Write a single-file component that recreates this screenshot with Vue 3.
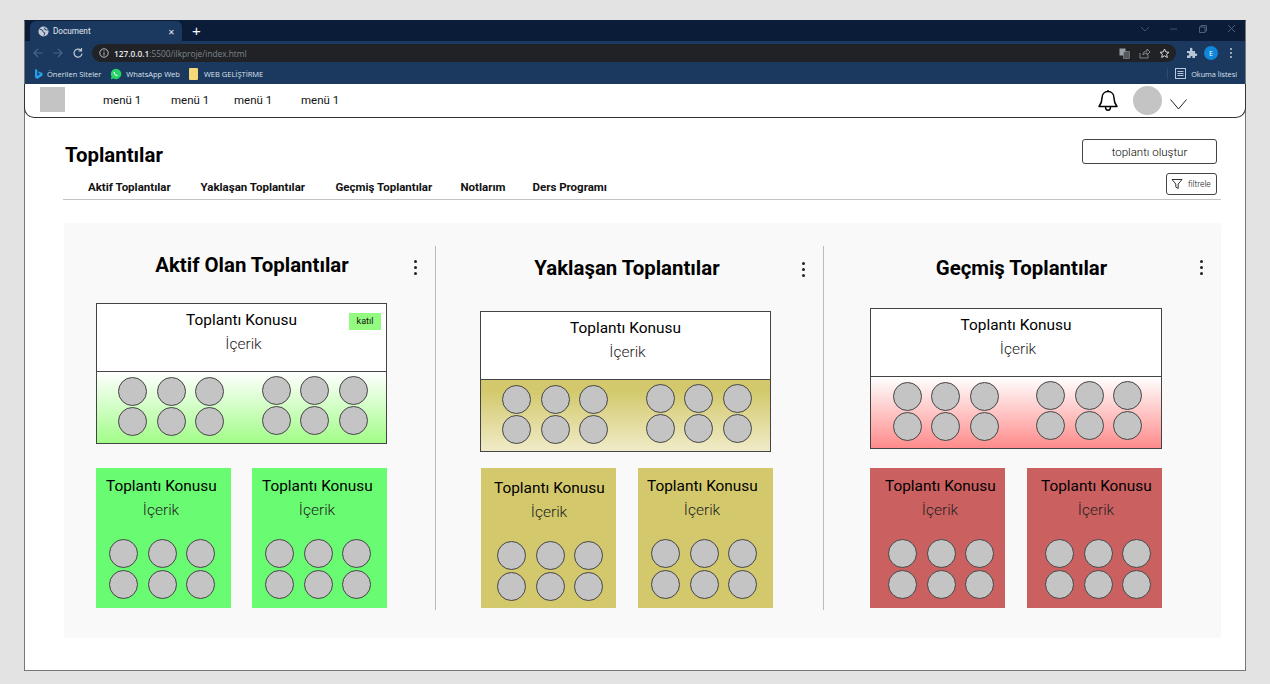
<template>
  <div class="page">
    <div class="frame">
      <div class="chrome">
        <div class="tabbar">
          <div class="tab">
            <svg class="globe" width="11" height="11" viewBox="0 0 12 12"><circle cx="6" cy="6" r="5.5" fill="#c3cad6" /><path d="M2 3.500l3 1 .5 2 2 1-1 3M8 1.500L7 3.500l2.500 1L11 4" stroke="#1c3a63" fill="none" /></svg>
            <span class="tab-title">Document</span>
            <span class="tab-x">✕</span>
          </div>
          <span class="tab-plus">+</span>
          <div class="win-btns">
            <svg width="10" height="10" viewBox="0 0 10 10"><path d="M1 3l4 4 4-4" stroke="#3f5573" fill="none" /></svg>
            <svg width="10" height="10" viewBox="0 0 10 10"><path d="M1 5h7" stroke="#3f5573" fill="none" /></svg>
            <svg width="10" height="10" viewBox="0 0 10 10"><path d="M1.500 3h5.500v5.500h-5.500zM3 3V1.500h5.500V7H7" stroke="#4d617d" fill="none" /></svg>
            <svg width="10" height="10" viewBox="0 0 10 10"><path d="M1 1l7 7M8 1l-7 7" stroke="#4d617d" fill="none" /></svg>
          </div>
        </div>
        <div class="toolbar">
          <svg class="nav" width="12" height="12" viewBox="0 0 12 12"><path d="M11 6H2M6 2L2 6l4 4" stroke="#4b6384" stroke-width="1.200" fill="none" /></svg>
          <svg class="nav" width="12" height="12" viewBox="0 0 12 12"><path d="M1 6h9M6 2l4 4-4 4" stroke="#4b6384" stroke-width="1.200" fill="none" /></svg>
          <svg class="nav" width="12" height="12" viewBox="0 0 12 12"><path d="M10 6.500A4 4 0 1 1 8.800 3.200M9.500 1v3h-3" stroke="#c3cad6" stroke-width="1.200" fill="none" /></svg>
          <div class="urlbar">
            <svg width="10" height="10" viewBox="0 0 10 10"><circle cx="5" cy="5" r="4.200" stroke="#b8bec6" fill="none" /><path d="M5 4.500V7.500M5 2.500v1" stroke="#b8bec6" /></svg>
            <span class="url"><b>127.0.0.1</b>:5500/ilkproje/index.html</span>
            <div class="url-icons">
              <svg width="11" height="11" viewBox="0 0 11 11"><rect x="0.500" y="0.500" width="6" height="7" fill="#9aa0a6" /><rect x="4.500" y="3.500" width="6" height="7" fill="#55595e" stroke="#9aa0a6" stroke-width="0.500" /></svg>
              <svg width="11" height="11" viewBox="0 0 11 11"><path d="M1 5v5h8V7M4 7c0-3 2-4 4-4V1l3 3-3 3V5C6 5 5 6 4 7z" stroke="#9aa0a6" stroke-width="0.800" fill="none" /></svg>
              <svg width="11" height="11" viewBox="0 0 11 11"><path d="M5.500 1l1.400 3 3.100.3-2.400 2.100.8 3.100-2.900-1.700-2.900 1.700.8-3.100L1 4.300 4.100 4z" stroke="#d5d8dc" fill="none" /></svg>
            </div>
          </div>
          <svg width="12" height="12" viewBox="0 0 12 12"><path d="M1 4h3V2a1.200 1.200 0 0 1 2.400 0V4H9v2.500h1a1.200 1.200 0 0 1 0 2.500H9v2H6.500V10a1 1 0 0 0-2 0v1H1V8.500h1a1.200 1.200 0 0 0 0-2.500H1z" fill="#b9c6da" /></svg>
          <span class="profile">E</span>
          <svg width="4" height="12" viewBox="0 0 4 12"><circle cx="2" cy="2" r="1" fill="#c3cad6" /><circle cx="2" cy="6" r="1" fill="#c3cad6" /><circle cx="2" cy="10" r="1" fill="#c3cad6" /></svg>
        </div>
        <div class="bookmarks">
          <span class="bm">
            <svg width="9" height="12" viewBox="0 0 9 12"><path d="M1 1l2.300.8v6l3-1.700-1.500-.7-.9-2.200L8.500 5v2.400L3.300 11 1 9.500z" fill="#2a9fe8" /></svg>
            Önerilen Siteler
          </span>
          <span class="bm">
            <svg width="12" height="12" viewBox="0 0 12 12"><path d="M6 .8a5.200 5.200 0 0 0-4.500 7.800L.8 11.200l2.700-.7A5.200 5.200 0 1 0 6 .8z" fill="#25d366" /><path d="M4 3.500c-.8.800-.4 2 .7 3.200s2.400 1.700 3.200.9l-1-1-.7.400c-.6-.3-1.100-.9-1.400-1.500l.4-.7z" fill="#fff" /></svg>
            WhatsApp Web
          </span>
          <span class="bm folder">
            <svg width="9" height="12" viewBox="0 0 9 12"><rect width="9" height="12" rx="1" fill="#f6d878" /></svg>
            WEB GELİŞTİRME
          </span>
          <span class="reading">
            <svg width="11" height="11" viewBox="0 0 11 11"><rect x="0.500" y="0.500" width="10" height="10" stroke="#b9c6da" fill="none" /><path d="M2.500 3.500h6M2.500 5.500h6M2.500 7.500h6" stroke="#b9c6da" /></svg>
            Okuma listesi
          </span>
        </div>
      </div>

      <header class="topnav">
        <div class="logo"></div>
        <nav class="menu">
          <a v-for="(m, i) in menus" :key="i" :style="{ width: m + 'px' }">menü 1</a>
        </nav>
        <svg class="bell" width="22" height="24" viewBox="0 0 22 24">
          <path d="M11 2.500c-3.800 0-6 3-6 6.500 0 4-1 6-3 8.500h18c-2-2.500-3-4.500-3-8.500 0-3.500-2.200-6.500-6-6.500zM11 1v1.500M8.500 17.500c0 5 5 5 5 0" stroke="#000" stroke-width="1.500" fill="none" stroke-linejoin="round" />
        </svg>
        <div class="avatar"></div>
        <svg class="caret" width="17" height="11" viewBox="0 0 17 11"><path d="M.5 .5l8 9.500 8-9.500" stroke="#222" fill="none" /></svg>
      </header>

      <main class="content">
        <div class="title-row">
          <h1>Toplantılar</h1>
          <button class="create">toplantı oluştur</button>
        </div>
        <div class="tabs-row">
          <a v-for="t in tabs" :key="t.text" :style="{ width: t.w + 'px' }">{{ t.text }}</a>
          <button class="filter">
            <svg width="12" height="12" viewBox="0 0 12 12"><path d="M1 1.500h10L7.200 6v4.500L4.800 9V6z" stroke="#333" fill="none" /></svg>
            filtrele
          </button>
        </div>

        <section class="board">
          <div v-for="col in columns" :key="col.name" class="col" :class="col.name">
            <div class="col-head">
              <h2>{{ col.title }}</h2>
              <span class="dots"><i></i><i></i><i></i></span>
            </div>
            <div class="wide">
              <div class="wide-top">
                <div class="topic">Toplantı Konusu</div>
                <div class="body">İçerik</div>
                <span v-if="col.join" class="join">katıl</span>
              </div>
              <div class="wide-bottom">
                <div v-for="g in 2" :key="g" class="people">
                  <span v-for="p in 6" :key="p" class="person"></span>
                </div>
              </div>
            </div>
            <div class="small-row">
              <div v-for="(s, i) in col.smalls" :key="i" class="small" :style="{ paddingTop: 9 + s.y + 'px' }">
                <div class="small-text" :style="{ marginLeft: s.t + 'px' }">
                  <div class="topic">Toplantı Konusu</div>
                  <div class="body">İçerik</div>
                </div>
                <div class="people" :style="{ marginLeft: s.p + 'px' }">
                  <span v-for="p in 6" :key="p" class="person"></span>
                </div>
              </div>
            </div>
          </div>
        </section>
      </main>
    </div>
  </div>
</template>

<script setup>
const menus = [68, 63, 67, 60]

const tabs = [
  { text: 'Aktif Toplantılar', w: 112.5 },
  { text: 'Yaklaşan Toplantılar', w: 135 },
  { text: 'Geçmiş Toplantılar', w: 125 },
  { text: 'Notlarım', w: 72 },
  { text: 'Ders Programı', w: 90 },
]

const columns = [
  {
    name: 'active',
    title: 'Aktif Olan Toplantılar',
    join: true,
    smalls: [{ t: 10, p: 13, y: 0 }, { t: 10, p: 13, y: 0 }],
  },
  {
    name: 'upcoming',
    title: 'Yaklaşan Toplantılar',
    join: false,
    smalls: [{ t: 13, p: 16, y: 2 }, { t: 9, p: 13, y: 0 }],
  },
  {
    name: 'past',
    title: 'Geçmiş Toplantılar',
    join: false,
    smalls: [{ t: 15, p: 18, y: 0 }, { t: 14, p: 18, y: 0 }],
  },
]
</script>

<style>
html, body {
  margin: 0;
  background: #e3e3e3;
}
</style>

<style scoped>
.page {
  width: 1270px;
  height: 684px;
  overflow: hidden;
  padding: 20px 24px 0;
  box-sizing: border-box;
  background: #e3e3e3;
  font-family: Roboto, sans-serif;
}

.frame {
  width: 1222px;
  height: 651px;
  background: #fff;
  border: 1px solid #777;
  border-top-color: #0a1d3a;
  box-sizing: border-box;
}

.chrome { font-family: "Open Sans", sans-serif; color: #dbe2ec; }

.tabbar {
  height: 20px;
  background: #0a1c38;
  display: flex;
  align-items: flex-end;
  padding-left: 5px;
}
.tab {
  width: 152px;
  height: 20px;
  background: #1b385f;
  border-radius: 6px 6px 0 0;
  display: flex;
  align-items: center;
  padding-left: 8px;
  gap: 4px;
  box-sizing: border-box;
}
.tab-title { font: 8.2px Roboto, sans-serif; flex: 1; color: #e4e9f0; }
.tab-x { font-size: 8px; margin-right: 7px; color: #e4e9f0; }
.tab-plus { color: #fff; font-size: 15px; line-height: 20px; margin-left: 10px; font-family: "Liberation Sans", sans-serif; }
.win-btns {
  margin-left: auto;
  margin-right: 8px;
  margin-top: -4px;
  align-self: center;
  display: flex;
  gap: 19px;
}

.toolbar {
  height: 22px;
  background: #1b385f;
  display: flex;
  align-items: center;
  padding: 2px 0 0 7px;
  gap: 8px;
  box-sizing: border-box;
}
.toolbar .nav { flex: none; }
.urlbar {
  width: 1084px;
  height: 18px;
  border-radius: 9px;
  background: #202226;
  display: flex;
  align-items: center;
  padding: 0 7px;
  gap: 5px;
  box-sizing: border-box;
  margin-right: 2px;
}
.url { font-size: 8.3px; color: #7f858c; }
.url b { color: #e8eaed; font-weight: 600; }
.url-icons { margin-left: auto; display: flex; gap: 9px; margin-right: -1px; }
.profile {
  width: 14px;
  height: 14px;
  border-radius: 50%;
  background: #0f86d8;
  color: #fff;
  font-size: 7px;
  display: flex;
  align-items: center;
  justify-content: center;
  margin: 0 3px 0 -2px;
}

.bookmarks {
  height: 21px;
  background: #1b385f;
  display: flex;
  align-items: center;
  padding-left: 9px;
  gap: 9px;
  font-size: 7.5px;
  box-sizing: border-box;
}
.bm { display: flex; align-items: center; gap: 4px; }
.bm.folder { gap: 6px; }
.reading {
  margin-left: auto;
  margin-right: 8px;
  display: flex;
  align-items: center;
  gap: 5px;
  font-size: 7.3px;
  border-left: 1px solid #2c4a74;
  padding-left: 7px;
}

.topnav {
  height: 34px;
  border-bottom: 1px solid #333;
  border-left: 1px solid #333;
  border-right: 1px solid #333;
  border-radius: 0 0 10px 10px;
  display: flex;
  align-items: center;
  box-sizing: border-box;
  margin: 0 -1px;
}
.logo {
  width: 25px;
  height: 25px;
  background: #c4c4c4;
  margin-left: 15px;
  margin-top: -2px;
}
.menu {
  display: flex;
  margin-left: 38px;
  margin-top: -2px;
  font-size: 11.5px;
  color: #111;
}
.menu a { display: block; }
.bell { margin-left: 736px; }
.avatar {
  width: 29px;
  height: 29px;
  border-radius: 50%;
  background: #c4c4c4;
  margin-left: 14px;
}
.caret { margin-left: 8px; margin-top: 8px; }

.content { padding: 0 24px 0 39px; }

.title-row {
  display: flex;
  justify-content: space-between;
  padding-top: 21px;
  height: 55px;
  box-sizing: border-box;
}
h1 {
  margin: 4px 0 0 1px;
  font-size: 20.4px;
  line-height: 24px;
  font-weight: 700;
  color: #000;
}
.create {
  width: 135px;
  height: 25px;
  background: #fff;
  border: 1px solid #444;
  border-radius: 3px;
  font: 300 11.5px Roboto, sans-serif;
  color: #000;
  margin-right: 4px;
  padding: 0;
}

.tabs-row {
  display: flex;
  align-items: center;
  height: 27px;
  margin-left: -1px;
  border-bottom: 1px solid #c4c4c4;
  font-size: 11.5px;
  font-weight: 700;
  color: #111;
  padding-left: 25px;
  box-sizing: border-box;
}
.tabs-row a { display: block; padding-top: 1px; white-space: nowrap; }
.filter {
  margin-left: auto;
  margin-right: 4px;
  align-self: flex-start;
  width: 51px;
  height: 22px;
  background: #fff;
  border: 1px solid #444;
  border-radius: 3px;
  font: 300 8.5px Roboto, sans-serif;
  color: #111;
  display: flex;
  align-items: center;
  gap: 5px;
  padding: 0 0 0 4px;
  box-sizing: border-box;
}

.board {
  margin-top: 23px;
  height: 415px;
  background: #f9f9f9;
  display: flex;
  padding-top: 23px;
  box-sizing: border-box;
  border-radius: 2px;
}

.col {
  position: relative;
  height: 364px;
  box-sizing: border-box;
}
.col.active { width: 372px; border-right: 1px solid #bbb; padding-left: 32px; }
.col.upcoming { width: 388px; border-right: 1px solid #bbb; padding-left: 44px; }
.col.past { width: 397px; padding-left: 46px; }

.col-head {
  height: 43px;
  display: flex;
  justify-content: center;
  align-items: center;
  position: relative;
}
.col.active .col-head { width: 312px; height: 38px; }
.col.upcoming .col-head { width: 294px; }
.col.past .col-head { width: 303px; }

h2 {
  margin: 0;
  font-size: 20.4px;
  font-weight: 700;
  line-height: 24px;
  color: #000;
  white-space: nowrap;
}

.dots {
  position: absolute;
  top: 14px;
  display: flex;
  flex-direction: column;
  gap: 3px;
}
.col.active .dots { left: 318px; }
.col.upcoming .dots { left: 322px; top: 16px; }
.col.past .dots { left: 330px; }
.dots i { width: 3px; height: 3px; border-radius: 50%; background: #222; display: block; }

.wide {
  width: 291px;
  border: 1px solid #444;
  box-sizing: border-box;
  background: #fff;
}
.col.active .wide { margin-top: 19px; height: 141px; }
.col.upcoming .wide { margin-top: 22px; height: 141px; }
.col.past .wide { margin-top: 19px; height: 141px; width: 292px; }

.wide-top {
  height: 68px;
  position: relative;
  text-align: center;
  border-bottom: 1px solid #444;
  padding-top: 6.5px;
  box-sizing: border-box;
}
.topic {
  font-size: 15.4px;
  line-height: 18px;
  color: #000;
  white-space: nowrap;
}
.body {
  font-size: 15.5px;
  font-weight: 300;
  line-height: 18px;
  margin-top: 6px;
  color: #222;
}
.wide-top .body { padding-left: 4px; }

.join {
  position: absolute;
  right: 5px;
  top: 9px;
  width: 32px;
  height: 17px;
  background: #93fb7f;
  font-size: 9px;
  line-height: 17px;
  text-align: center;
  color: #111;
}

.wide-bottom {
  height: 71px;
  display: flex;
  justify-content: center;
  gap: 37.5px;
  padding: 3.5px 0 0 3px;
  box-sizing: border-box;
}
.wide-bottom .people:first-child { margin-top: 1px; }
.col.active .wide-bottom { background: linear-gradient(#fff, #a2fd88); }
.col.upcoming .wide-bottom { background: linear-gradient(#d3c96c 0 15%, #f0ebc8); }
.col.past .wide-bottom { background: linear-gradient(#fff, #ff8b8b); }

.people {
  display: grid;
  grid-template-columns: repeat(3, 29px);
  grid-auto-rows: 29px;
  column-gap: 9.5px;
  row-gap: 1.7px;
}
.person {
  border-radius: 50%;
  background: #c4c4c4;
  border: 1px solid #444;
  box-sizing: border-box;
}

.small-row {
  display: flex;
  gap: 22px;
  margin-top: 24px;
}
.col.active .small-row { gap: 21px; }
.col.upcoming .small-row { margin-top: 16px; margin-left: 1px; }
.col.past .small-row { margin-top: 19px; }

.small {
  width: 135px;
  height: 140px;
  box-sizing: border-box;
}
.small-text { width: 110px; text-align: center; }
.small .people { margin-top: 20px; width: fit-content; }
.col.active .small { background: #69fb71; }
.col.upcoming .small { background: #d3c96c; }
.col.past .small { background: #cb6060; }
</style>
